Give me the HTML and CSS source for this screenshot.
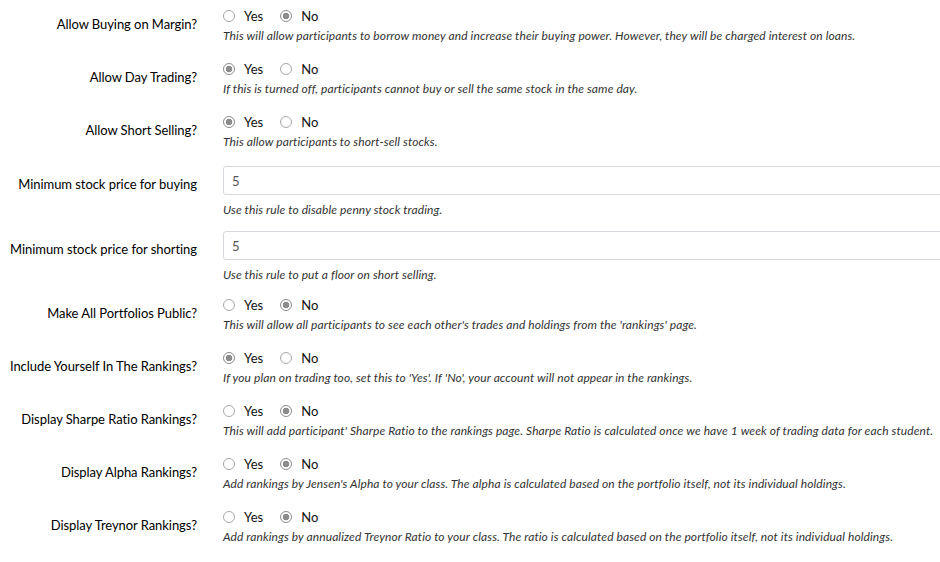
FILE: index.html
```html
<!DOCTYPE html>
<html>
<head>
<meta charset="utf-8">
<link rel="stylesheet" href="styles.css">
</head>
<body>
<form class="settings">
  <div class="row radio-row">
    <label class="label">Allow Buying on Margin?</label>
    <div class="control">
      <div class="options">
        <label class="opt"><input type="radio" name="r1"> Yes</label>
        <label class="opt"><input type="radio" name="r1" checked> No</label>
      </div>
      <p class="help">This will allow participants to borrow money and increase their buying power. However, they will be charged interest on loans.</p>
    </div>
  </div>
  <div class="row radio-row">
    <label class="label">Allow Day Trading?</label>
    <div class="control">
      <div class="options">
        <label class="opt"><input type="radio" name="r2" checked> Yes</label>
        <label class="opt"><input type="radio" name="r2"> No</label>
      </div>
      <p class="help">If this is turned off, participants cannot buy or sell the same stock in the same day.</p>
    </div>
  </div>
  <div class="row radio-row">
    <label class="label">Allow Short Selling?</label>
    <div class="control">
      <div class="options">
        <label class="opt"><input type="radio" name="r3" checked> Yes</label>
        <label class="opt"><input type="radio" name="r3"> No</label>
      </div>
      <p class="help">This allow participants to short-sell stocks.</p>
    </div>
  </div>
  <div class="row input-row">
    <label class="label">Minimum stock price for buying</label>
    <div class="control">
      <input class="text" type="text" value="5">
      <p class="help">Use this rule to disable penny stock trading.</p>
    </div>
  </div>
  <div class="row input-row">
    <label class="label">Minimum stock price for shorting</label>
    <div class="control">
      <input class="text" type="text" value="5">
      <p class="help">Use this rule to put a floor on short selling.</p>
    </div>
  </div>
  <div class="row radio-row">
    <label class="label">Make All Portfolios Public?</label>
    <div class="control">
      <div class="options">
        <label class="opt"><input type="radio" name="r6"> Yes</label>
        <label class="opt"><input type="radio" name="r6" checked> No</label>
      </div>
      <p class="help">This will allow all participants to see each other's trades and holdings from the 'rankings' page.</p>
    </div>
  </div>
  <div class="row radio-row">
    <label class="label">Include Yourself In The Rankings?</label>
    <div class="control">
      <div class="options">
        <label class="opt"><input type="radio" name="r7" checked> Yes</label>
        <label class="opt"><input type="radio" name="r7"> No</label>
      </div>
      <p class="help">If you plan on trading too, set this to 'Yes'. If 'No', your account will not appear in the rankings.</p>
    </div>
  </div>
  <div class="row radio-row">
    <label class="label">Display Sharpe Ratio Rankings?</label>
    <div class="control">
      <div class="options">
        <label class="opt"><input type="radio" name="r8"> Yes</label>
        <label class="opt"><input type="radio" name="r8" checked> No</label>
      </div>
      <p class="help">This will add participant' Sharpe Ratio to the rankings page. Sharpe Ratio is calculated once we have 1 week of trading data for each student.</p>
    </div>
  </div>
  <div class="row radio-row">
    <label class="label">Display Alpha Rankings?</label>
    <div class="control">
      <div class="options">
        <label class="opt"><input type="radio" name="r9"> Yes</label>
        <label class="opt"><input type="radio" name="r9" checked> No</label>
      </div>
      <p class="help">Add rankings by Jensen's Alpha to your class. The alpha is calculated based on the portfolio itself, not its individual holdings.</p>
    </div>
  </div>
  <div class="row radio-row">
    <label class="label">Display Treynor Rankings?</label>
    <div class="control">
      <div class="options">
        <label class="opt"><input type="radio" name="r10"> Yes</label>
        <label class="opt"><input type="radio" name="r10" checked> No</label>
      </div>
      <p class="help">Add rankings by annualized Treynor Ratio to your class. The ratio is calculated based on the portfolio itself, not its individual holdings.</p>
    </div>
  </div>
</form>
</body>
</html>
```

FILE: styles.css
```css
html, body {
  margin: 0;
  padding: 0;
  background: #fff;
  overflow: hidden;
}
body {
  font-family: Lato, "Open Sans", sans-serif;
  color: #111;
  width: 940px;
}
.settings {
  padding-top: 6px;
  width: 980px;
}
.row {
  display: grid;
  grid-template-columns: 197px 1fr;
  column-gap: 26px;
}
.radio-row {
  margin-bottom: 15px;
}
.input-row {
  padding-top: 1px;
  margin-bottom: 12px;
}
.label {
  text-align: right;
  font-size: 13px;
  line-height: 18px;
  letter-spacing: -0.06px;
  color: #000;
}
.radio-row .label {
  padding-top: 9px;
}
.input-row .label {
  padding-top: 9px;
}
.control {
  min-width: 0;
}
.options {
  display: flex;
  gap: 17px;
  height: 20px;
  align-items: center;
}
.opt {
  display: flex;
  align-items: center;
  font-size: 13px;
  color: #111;
}
.opt input {
  -webkit-appearance: none;
  appearance: none;
  box-sizing: border-box;
  margin: 0 9px 0 0;
  width: 12px;
  height: 12px;
  border: 1px solid #a8a8a8;
  border-radius: 50%;
  background: #fff;
}
.opt input:checked {
  border-color: #8c8c8c;
  background: radial-gradient(circle, #8c8c8c 0, #8c8c8c 3px, #fff 3.6px);
}
.help {
  margin: 2px 0 0 0;
  font-size: 12px;
  line-height: 16px;
  letter-spacing: 0.1px;
  font-style: italic;
  color: #333;
}
.input-row .help {
  margin-top: 7px;
}
.text {
  display: block;
  box-sizing: border-box;
  width: 100%;
  height: 29px;
  margin: 0;
  padding: 0 8px;
  border: 1px solid #d4d9de;
  border-radius: 3px;
  font-family: Lato, sans-serif;
  font-size: 13px;
  color: #555;
  background: #fff;
  outline: none;
}
```
